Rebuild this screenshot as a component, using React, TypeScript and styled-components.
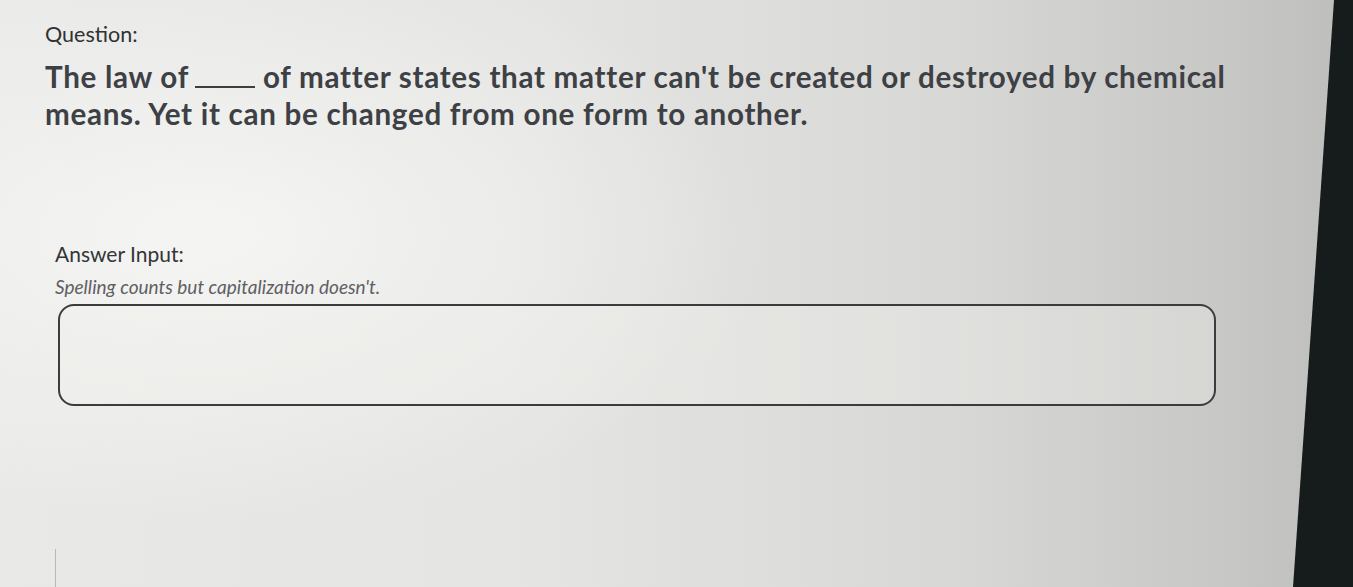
import React from "react";
import styled, { createGlobalStyle } from "styled-components";

const GlobalStyle = createGlobalStyle`
  html, body {
    margin: 0;
    padding: 0;
    width: 100%;
    height: 100%;
    overflow: hidden;
  }
  body {
    background: #161c1b;
    font-family: Lato, "Noto Sans", sans-serif;
  }
`;

// the photographed monitor: bright panel with a slanted dark bezel on the right
const Screen = styled.main`
  width: 1353px;
  height: 587px;
  box-sizing: border-box;
  padding: 20px 0 0 45px;
  display: flex;
  flex-direction: column;
  background:
    radial-gradient(ellipse 60% 70% at 15% 40%, rgba(246, 246, 244, 0.9), rgba(246, 246, 244, 0) 70%),
    linear-gradient(90deg, #e9e9e7 0%, #e4e4e2 40%, #d8d8d6 70%, #c6c6c4 92%, #bdbdbb 100%);
  clip-path: polygon(0 0, 1334px 0, 1293px 100%, 0 100%);
`;

const Label = styled.div`
  font-size: 21.5px;
  font-weight: 400;
  color: #2f3133;
  line-height: 28px;
`;

const QuestionText = styled.p`
  margin: 10px 0 0;
  font-size: 29.6px;
  font-weight: 700;
  line-height: 37px;
  letter-spacing: 0.7px;
  color: #3d4044;
  white-space: nowrap;
`;

const Blank = styled.span`
  display: inline-block;
  width: 60px;
  height: 2px;
  background: #3b3e42;
  margin: 0 8px 0 6px;
  vertical-align: baseline;
`;

const AnswerSection = styled.section`
  margin: 109px 0 0 10px;
  display: flex;
  flex-direction: column;
`;

const AnswerLabel = styled.div`
  font-size: 21px;
  color: #333538;
  line-height: 26px;
`;

const Hint = styled.div`
  margin-top: 9px;
  font-size: 19px;
  font-style: italic;
  color: #5e6064;
  line-height: 22px;
`;

const AnswerBox = styled.input`
  margin: 6px 0 0 3px;
  width: 1158px;
  height: 102px;
  box-sizing: border-box;
  border: 2px solid #3a3c3e;
  border-radius: 16px;
  background: rgba(240, 240, 238, 0.35);
  outline: none;
  font: inherit;
`;

const StubLine = styled.div`
  margin: 143px 0 0 10px;
  width: 0;
  height: 40px;
  border-left: 1px solid #b8b8b6;
`;

export default function App() {
  return (
    <>
      <GlobalStyle />
      <Screen>
        <Label>Question:</Label>
        <QuestionText>
          The law of
          <Blank />
          of matter states that matter can't be created or destroyed by chemical
          <br />
          means. Yet it can be changed from one form to another.
        </QuestionText>
        <AnswerSection>
          <AnswerLabel>Answer Input:</AnswerLabel>
          <Hint>Spelling counts but capitalization doesn't.</Hint>
          <AnswerBox type="text" aria-label="Answer" />
        </AnswerSection>
        <StubLine />
      </Screen>
    </>
  );
}
